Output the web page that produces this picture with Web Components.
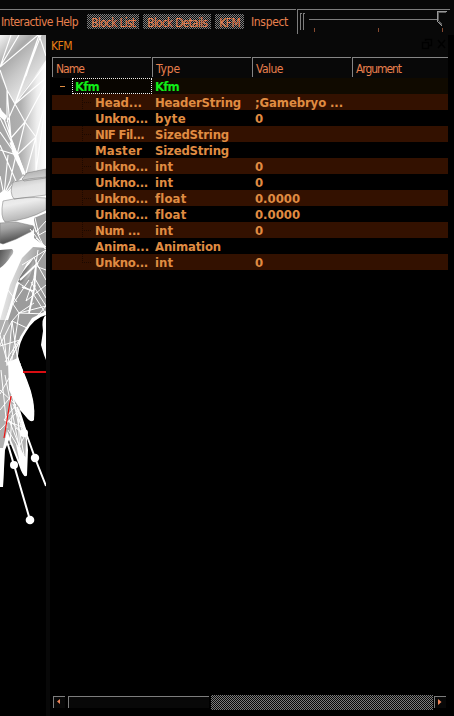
<!DOCTYPE html>
<html lang="en"><head><meta charset="utf-8"><title>KFM</title>
<style>
html,body{margin:0;background:#000;overflow:hidden}
body{width:454px;height:716px;font:12px/14px "DejaVu Sans Condensed","DejaVu Sans",sans-serif;color:#e8804e}
</style></head><body>
<app-window></app-window>
<script>
const define=(name,html,setup)=>customElements.define(name,class extends HTMLElement{
  connectedCallback(){
    if(this.shadowRoot)return;
    this.attachShadow({mode:'open'}).innerHTML=html;
    if(setup)setup(this,this.shadowRoot);
  }
});

/* A label whose letter spacing is adjusted to a given advance width. */
define('fit-label',`<style>:host{display:block;white-space:pre;overflow:visible}span{display:inline-block}</style><span></span>`,(el,r)=>{
  const s=r.querySelector('span');s.textContent=el.getAttribute('text');
  const w=+el.getAttribute('w');
  if(w)s.style.letterSpacing=((w-s.getBoundingClientRect().width)/s.textContent.length)+'px';
});

define('tool-button',`<style>
:host{display:block;box-sizing:border-box;height:15px;padding:2px 0 0 4px;flex:none;
background:repeating-conic-gradient(#7c7c7c 0 25%,#0a0a0a 0 50%) 0 0/2px 2px;line-height:14px}
</style><fit-label></fit-label>`,(el,r)=>{
  el.style.width=el.getAttribute('bw')+'px';
  const old=r.querySelector('fit-label'),l=document.createElement('fit-label');
  l.setAttribute('text',el.getAttribute('text'));l.setAttribute('w',el.getAttribute('w'));
  old.replaceWith(l);
});

define('lod-slider',`<style>:host{display:block;width:157px;height:25px;flex:none}svg{display:block}</style>
<svg width="157" height="25" shape-rendering="crispEdges">
<path d="M0 0H153V1H1V25H0ZM3 4H5V5H4V21H3ZM6 4H8V5H7V21H6ZM12 10H140V11H12Z" fill="#7d7d7d"/>
<path d="M140 2H150V13L145 17L140 12Z" fill="#080808"/>
<path d="M140 2H150V3H141V12H140ZM140 12h1v1h-1zM141 13h1v1h-1zM142 14h1v1h-1zM143 15h1v1h-1zM144 16h1v1h-1z" fill="#999"/>
<path d="M141 3H149V4H142V12H141ZM142 12h1v2h-1zM143 13h1v2h-1zM144 14h1v2h-1z" fill="#5a5a5a"/>
<path d="M17 19h1v4h-1zM81 19h1v4h-1zM145 19h1v4h-1z" fill="#874a30"/></svg>`);

define('tool-bar',`<style>
:host{display:flex;height:35px;background:#080808;box-sizing:border-box;padding-top:9px}
.menu{width:296px;height:26px;border-top:1px solid #7d7d7d;box-sizing:border-box;display:flex;padding-top:4px;margin-right:1px;flex:none}
.help{width:86px;padding-left:1px;box-sizing:border-box;flex:none}.gap{margin-left:4px}.inspect{margin-left:7px}
.help,.inspect{margin-top:1px}
</style><div class="menu"><div class="help"><fit-label text="Interactive Help" w="77"></fit-label></div>
<tool-button text="Block List" bw="52" w="44" style="margin-left:1px"></tool-button>
<tool-button class="gap" text="Block Details" bw="68" w="60"></tool-button>
<tool-button class="gap" text="KFM" bw="29" w="21"></tool-button>
<fit-label class="inspect" text="Inspect" w="37"></fit-label></div><lod-slider></lod-slider>`);

define('mesh-view',`<style>:host{display:block;width:46px;height:681px;background:#000;overflow:hidden;flex:none}svg{display:block}</style>
<svg width="46" height="681" viewBox="0 35 46 681">
<defs>
<linearGradient id="a" x1="0" y1="35" x2="46" y2="80" gradientUnits="userSpaceOnUse"><stop offset="0" stop-color="#f4f4f4"/><stop offset=".35" stop-color="#aaa"/><stop offset=".6" stop-color="#c8c8c8"/><stop offset="1" stop-color="#eee"/></linearGradient>
<linearGradient id="d" x1="0" y1="0" x2="46" y2="0" gradientUnits="userSpaceOnUse"><stop offset="0" stop-color="#a5a5a5"/><stop offset=".45" stop-color="#b0b0b0"/><stop offset=".8" stop-color="#eee"/><stop offset="1" stop-color="#fff"/></linearGradient>
<linearGradient id="e" x1="0" y1="0" x2="1" y2=".3"><stop offset="0" stop-color="#fff"/><stop offset="1" stop-color="#8c8c8c"/></linearGradient>
<linearGradient id="b" x1="0" y1="0" x2=".12" y2="1"><stop offset="0" stop-color="#969696"/><stop offset=".3" stop-color="#e4e4e4"/><stop offset=".5" stop-color="#ececec"/><stop offset=".8" stop-color="#a2a2a2"/><stop offset="1" stop-color="#4a4a4a"/></linearGradient>
<linearGradient id="c" x1="0" y1="0" x2="1" y2=".6"><stop offset="0" stop-color="#555"/><stop offset=".6" stop-color="#888"/><stop offset="1" stop-color="#e5e5e5"/></linearGradient>
</defs>
<path fill="#fff" d="M0 35H46V315Q34 318 26 332Q19 342 18 356L20 363L26 379Q35 400 34 418Q33 424 28 419L20 410L26 429L28 450L27 475Q24 480 19 465L15 455L9 440L5 450L3 487H0Z"/>
<path fill="url(#a)" d="M0 35H46V85L15 104L0 80Z"/>
<path fill="url(#d)" d="M0 76L15 104L46 60V180L23 176L12 187L0 200Z"/>
<path fill="url(#e)" d="M22 246L46 248L27 263L16 284L8 312L0 340V300Z"/>
<path fill="#fff" d="M0 240L30 235L40 240L22 258L10 285L0 320Z"/>
<path fill="#9c9c9c" d="M34 218L46 213V311L32 318L20 337L16 361L9 363L0 350V345L12 308L18 286L25 270L38 252L46 247L34 238Z"/>
<path fill="#b0b0b0" d="M0 320L8 320L17 363L22 392L19 415L26 440L25 465L19 460L13 445L7 431L3 448H0Z"/>
<g stroke="#fff" stroke-width="1.15" fill="none">
<path d="M0 67L11 35M0 67L19 35M0 67L38 35M39 35L15 104M39 35L26 76M41 35L15 104M39 35L46 56M15 104L46 64M15 104L46 78M7 90L15 104L25 122L36 137M25 122L46 83M36 137L46 101M7 90L0 70M7 90V117L14 154M15 104L7 122M7 90L11 138L25 122M17 155L25 122M36 137V171M36 137L17 155L0 150M0 108L14 146L24 174M0 118L19 158L25 175M0 132L16 155L10 181L0 204M0 145L16 181M4 195L0 176M4 195L15 181M4 195L8 155M36 137L26 173M46 101L36 171"/>
</g>
<path d="M11 142L24 174M13 150L20 165" stroke="#fff" stroke-width="3.4"/>
<path d="M0 109L7 116L5 121L0 117ZM0 193L4 190L12 193L6 199L0 201Z" fill="#fff"/>
<path fill="url(#b)" stroke="#777" stroke-width=".5" d="M27 173Q36 171 46 169V178L24 181L22 179ZM13 182Q30 178 46 177V195L14 199Q9 193 13 182ZM3 201Q25 196 46 198V210Q28 220 5 222Q0 217 3 201ZM0 223L16 222Q29 225 34 226Q34 231 28 233Q16 240 3 244L0 243Z"/>
<path fill="url(#c)" d="M0 250L12 249Q15 252 11 256Q6 264 0 268Z"/>
<path fill="url(#c)" d="M34 260Q33 270 29 277Q22 285 18 282Q21 271 34 260Z"/>
<g stroke="#fff" stroke-width="1" fill="none">
<path d="M31 220L45 249M33 218L36 232L46 221M35 218L39 235L46 231M30 229L46 249M36 238L46 247M46 250L22 265M46 250L37 264L46 280M34 257L38 267L46 270M38 250L34 277L46 298M35 275L26 301L46 285M31 282L46 306L19 313L13 304L29 280M17 282L31 291M8 290L17 302M19 313L46 314L30 289M12 302L0 335M12 321L19 313L34 303M12 321L27 328L46 306M12 321L0 345M12 321L18 363M27 328L5 362M20 340L9 363M19 313L11 366M0 335L8 365L12 321M0 346L20 340L8 365M4 335L7 366M17 364L0 394M14 385L20 401M20 363L15 395M12 370L22 400M12 390L24 455M13 404L26 436L9 420L23 455L8 430M0 390L16 405L4 420L25 428M0 410L12 395L22 430M0 430L18 411L20 460M12 415L10 445M1 370L7 428M5 375L19 447L25 435L16 428"/>
<path stroke-width="1.8" d="M38 263L20 280M36 266L34 290M35 285L29 313M22 287L33 291"/>
</g>
<path fill="#fff" d="M8 362L18 358L27 380Q36 402 34 420Q30 424 23 412Q15 403 9 390ZM0 449H4L3 486H0ZM16 444L27 459L27 475Q24 479 20 464Z"/>
<path d="M46 315Q41 318 43 331L41 345L44 355L46 360Z" fill="#fff"/>
<path d="M23 372H46" stroke="#d90d12" stroke-width="2"/><path d="M11 396L4 438" stroke="#e11" stroke-width="1.2"/>
<path d="M6 438L14 465L30 520M17 407L26 433L35 458L46 486" fill="none" stroke="#fff" stroke-width="2"/>
<g fill="#fff"><circle cx="14" cy="465" r="4"/><circle cx="30" cy="520" r="4.3"/><circle cx="24" cy="433" r="4"/><circle cx="35" cy="458" r="4.2"/></g>
</svg>`);

define('header-cell',`<style>:host{display:block;box-sizing:border-box;height:20px;border-left:1px solid #858585;border-top:1px solid #858585;padding:4px 0 0 3px;margin-right:1px;background:#080808;line-height:14px}</style><slot></slot>`);

define('tree-row',`<style>
:host{display:grid;grid-template-columns:100px 100px 100px 96px;height:16px;font-weight:bold;font-size:13px;line-height:17px;color:#e08c42}
:host([odd]){background:#331100}
:host([root]){background:#100a00;color:#10ee18}
.name{display:flex;box-sizing:border-box;padding-left:43px}
:host([root]) .name{padding-left:0}
.branch{display:none;width:20px;flex:none;background:#000;box-sizing:border-box;padding:8px 0 0 8px}.branch i{display:block;width:5px;height:1px;background:#df8c42}
:host([root]) .branch{display:block}
.focus{box-sizing:border-box;height:16px}
:host([root]) .focus{width:80px;border:1px dotted #eee;padding-left:2px;line-height:15px;background:#080500}
.type,.value{padding-left:3px}
:host([odd]) .name::before{content:"";width:10px;height:16px;margin-left:-13px;margin-right:3px;box-sizing:border-box;background:repeating-linear-gradient(#1a0800 0 1px,transparent 0 2px) 0 0/1px 100% no-repeat,repeating-linear-gradient(90deg,#1a0800 0 1px,transparent 0 2px) 0 8px/100% 1px no-repeat}
:host([last]) .name::before{height:9px}
</style><div class="name"><div class="branch"><i></i></div><div class="focus"></div></div><div class="type"></div><div class="value"></div>`,(el,r)=>{
  const add=(sel,k)=>{const v=el.getAttribute(k);if(!v)return;const[t,w]=v.split('|');
    const l=document.createElement('fit-label');l.setAttribute('text',t);l.setAttribute('w',w);r.querySelector(sel).append(l)};
  add('.focus','name');add('.type','type');add('.value','value');
});

define('scroll-bar',`<style>
:host{display:flex;height:15px;width:396px;box-sizing:border-box}
.arrow,.thumb{box-sizing:border-box;height:12px;margin-top:1px;background:#080808;border-left:1px solid #7d7d7d;border-top:1px solid #7d7d7d;flex:none}
.arrow{width:12px}.arrow svg{display:block}.left{margin-left:1px}.thumb{width:141px;margin-left:3px}
.track{width:222px;margin-left:2px;margin-right:1px;background:repeating-conic-gradient(#7c7c7c 0 25%,#080808 0 50%) 0 0/2px 2px}
</style><div class="arrow left"><svg width="11" height="11"><path d="M6 2V7L3 4.5Z" fill="#ee8357"/></svg></div><div class="thumb"></div><div class="track"></div>
<div class="arrow"><svg width="11" height="11"><path d="M3 2V8L6.5 5Z" fill="#ee8357"/></svg></div>`);

define('kfm-dock',`<style>
:host{display:flex;flex-direction:column;width:398px;height:681px;padding-left:2px;box-sizing:border-box;background:#000}
.title{display:flex;justify-content:space-between;height:22px;background:#080808;box-sizing:border-box;padding:4px 1px 0 1px;margin-left:-2px;color:#e87f14}
.title svg{margin-top:-1px}
.head{display:grid;grid-template-columns:100px 100px 100px 97px;height:21px;width:396px;background:#080808}
.space{flex:1}scroll-bar{margin-bottom:6px}
</style><div class="title"><fit-label text="KFM" w="21"></fit-label><svg width="26" height="12" fill="none" stroke="#000"><path d="M4.5 3V1.5H10.5V7.5H8M1.5 4.5H7.5V10.5H1.5ZM17 2L24 10M24 2L17 10" stroke-width="1.4"/></svg></div>
<div class="head"><header-cell><fit-label text="Name" w="28"></fit-label></header-cell><header-cell><fit-label text="Type" w="24"></fit-label></header-cell><header-cell><fit-label text="Value" w="27"></fit-label></header-cell><header-cell><fit-label text="Argument" w="45"></fit-label></header-cell></div>
<div class="rows">
<tree-row root name="Kfm|24" type="Kfm|24"></tree-row>
<tree-row odd name="Head...|47" type="HeaderString|86" value=";Gamebryo ...|88"></tree-row>
<tree-row name="Unkno...|53" type="byte|31" value="0|9"></tree-row>
<tree-row odd name="NIF Fil...|49" type="SizedString|74"></tree-row>
<tree-row name="Master|47" type="SizedString|74"></tree-row>
<tree-row odd name="Unkno...|53" type="int|18" value="0|9"></tree-row>
<tree-row name="Unkno...|53" type="int|18" value="0|9"></tree-row>
<tree-row odd name="Unkno...|53" type="float|31" value="0.0000|45"></tree-row>
<tree-row name="Unkno...|53" type="float|31" value="0.0000|45"></tree-row>
<tree-row odd name="Num ...|45" type="int|18" value="0|9"></tree-row>
<tree-row name="Anima...|54" type="Animation|66"></tree-row>
<tree-row odd last name="Unkno...|53" type="int|18" value="0|9"></tree-row>
</div><div class="space"></div><scroll-bar></scroll-bar>`);

define('app-window',`<style>:host{display:block;width:454px;height:716px;background:#000}.body{display:flex}.split{width:4px;background:#080808;flex:none}</style>
<tool-bar></tool-bar><div class="body"><mesh-view></mesh-view><div class="split"></div><kfm-dock></kfm-dock></div>`);
</script></body></html>
